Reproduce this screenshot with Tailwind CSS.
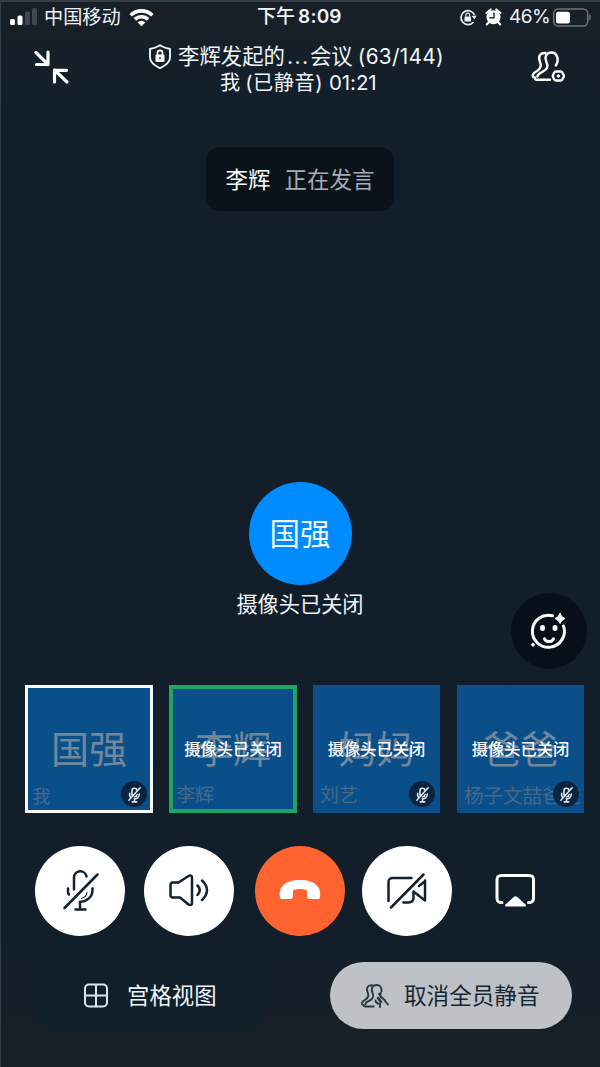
<!DOCTYPE html>
<html lang="zh-CN">
<head>
<meta charset="utf-8">
<title>视频会议</title>
<script src="https://cdn.jsdelivr.net/npm/@tailwindcss/browser@4"></script>
</head>
<body class="font-[Inter,'Noto_Sans_CJK_SC',sans-serif]">
<main class="relative flex h-[1067px] w-[600px] flex-col overflow-hidden border-t-2 border-l border-[#323d46] bg-linear-to-b from-[#191f28] via-[#121f2b] via-10% to-[#121f2b] text-[#eff5fa] whitespace-nowrap">

  <!-- Status bar -->
  <header class="flex h-[30px] shrink-0 items-center pl-[9px] text-[18px] leading-[28px]">
    <svg class="h-[18px] w-[28px]" viewBox="10 7 28 18"><rect x="10" y="18" width="5" height="6" rx="1.5" fill="#fff"/><rect x="17.500" y="14.500" width="5" height="9.500" rx="1.500" fill="#fff"/><rect x="25" y="10.500" width="5" height="13.500" rx="1.500" fill="#414750"/><rect x="32" y="7" width="5" height="17" rx="1.500" fill="#414750"/></svg>
    <span class="ml-[6px] w-[78px] text-[19.2px]">中国移动</span>
    <svg class="ml-[7px] h-[18px] w-[26px]" viewBox="129 7 26 18" fill="none" stroke="#fff" stroke-width="3.600"><path d="M130.600 14.200a15.800 15.800 0 0 1 21.800 0M134.900 18.400a9.500 9.500 0 0 1 13.200 0"/><path d="M137.500 21.300q4-3.200 8 0l-4 4z" fill="#fff" stroke="none"/></svg>
    <span class="ml-[102px] w-[88px] text-[19px] font-medium">下午<b class="ml-[3px] font-semibold tracking-[0.2px]">8:09</b></span>
    <svg class="ml-[114px] h-[18px] w-[18px]" viewBox="459 7 18 18" fill="none" stroke="#eef3f7" stroke-width="1.700"><path d="M474.500 14a7 7 0 1 0-1 7"/><path d="m471.800 15 4.700-.4-2 4z" fill="#eef3f7" stroke="none"/><rect x="464.500" y="15.500" width="6.500" height="5" rx=".6" fill="#eef3f7" stroke="none"/><path d="M465.900 15.600v-1.700a1.850 1.850 0 0 1 3.700 0v1.700" stroke-width="1.200"/></svg>
    <svg class="ml-[8px] h-[18px] w-[17px]" viewBox="485 6 17 18"><circle cx="493.500" cy="15.300" r="7" fill="#fff"/><path d="m486.500 11 4.200-3.600M500.500 11l-4.200-3.600M488.500 20.500l-1.700 2M498.500 20.500l1.700 2" stroke="#fff" stroke-width="2" stroke-linecap="round"/><path d="M494 10.500v5.300h-4.500" fill="none" stroke="#1b2631" stroke-width="1.400"/></svg>
    <span class="ml-[7px] w-[43px] text-[19px] tracking-[-0.5px]">46%</span>
    <svg class="h-[19px] w-[40px]" viewBox="552 6 40 19"><rect x="553.700" y="7" width="34" height="17" rx="4.500" fill="none" stroke="#6d747b" stroke-width="1.500"/><rect x="556" y="9.700" width="14" height="11.800" rx="2.500" fill="#fff"/><path d="M589.500 13q1.500 2.500 0 5" stroke="#6d747b" stroke-width="1.500" fill="none"/></svg>
  </header>

  <!-- Meeting title -->
  <section class="flex h-[80px] shrink-0 pl-[31px]">
    <svg class="mt-[16px] h-[40px] w-[40px]" viewBox="32 48 40 40" fill="none" stroke="#fff" stroke-width="3.200" stroke-linecap="round" stroke-linejoin="round"><path d="m36 52.500 12 12M48 52v12.500H36.500M67 82 54.500 70M54.500 82V70.300h12"/></svg>
    <div class="ml-[76px] flex w-[300px] flex-col pt-[11px]">
      <div class="flex h-[27px] w-full items-center text-[21.4px]">
        <svg class="h-[26px] w-[24px]" viewBox="148 42 24 26" fill="none" stroke="#fff" stroke-width="1.800" stroke-linejoin="round"><path d="M160 43.300c3.500 2.500 6.500 3.200 10 3.700v8.500c0 5-4.500 8-10 10.700-5.500-2.700-10-5.700-10-10.700V47c3.500-.5 6.500-1.200 10-3.700z"/><rect x="155.500" y="52.500" width="9" height="7.500" rx="1" fill="#fff" stroke="none"/><path d="M157.500 53v-2.200a2.500 2.500 0 0 1 5 0V53"/><path d="M160 55v2.500" stroke="#14202c" stroke-width="1.200"/></svg>
        <span class="ml-[6px]">李辉发起的</span><span class="w-[25px] pl-[2px] tracking-[1.300px]">...</span><span>会议</span><span class="ml-[5px] text-[20.800px] tracking-[0.300px]">(63/144)</span>
      </div>
      <div class="ml-[72px] flex h-[26px] items-center text-[20.200px]"><span>我</span><span class="ml-[5px] tracking-[0.500px]">(已静音)</span><span class="ml-[6px] text-[20.500px] tracking-[-0.100px]">01:21</span></div>
    </div>
    <svg class="ml-[82px] mt-[17px] h-[36px] w-[38px]" viewBox="530 50 38 36" fill="none" stroke="#fff" stroke-width="2.400" stroke-linecap="round" stroke-linejoin="round"><path d="M555.800 66.500c3.500-5 1.800-13-4.500-13-5.500 0-6.800 5-5.200 8.500 2.500 5.500 1.500 8-3 10.500-3 1.600-5.500 2.300-5.700 5"/><path d="M545.500 54c-5.800-.5-7.700 4-5.500 9 2 4.500.5 6.800-3 9-2.500 1.500-4.500 2.800-4.300 4.800.2 1.500 1.500 1.700 2.300 1.700-.5 1.500.5 2.300 2 2.300h13"/><path d="M555.800 72.500h5q1 0 1.500 1l1.300 2.500q.5 1 0 2l-1.300 2.500q-.5 1-1.500 1h-5q-1 0-1.500-1l-1.300-2.500q-.5-1 0-2l1.300-2.500q.5-1 1.500-1z"/><circle cx="558.300" cy="77" r="1.300" fill="#fff" stroke-width="1"/></svg>
  </section>

  <!-- Active speaker -->
  <section class="ml-[205px] mt-[35px] flex h-[64px] w-[188px] shrink-0 items-center justify-center gap-[14px] rounded-[14px] bg-[#0a121b] text-[22.5px] leading-[32px]"><span class="pt-px text-white">李辉</span><span class="pt-px text-[#a6adb3]">正在发言</span></section>

  <!-- Main participant -->
  <section class="mt-[271px] flex h-[203px] w-[598px] shrink-0 flex-col items-center">
    <div class="flex h-[103px] w-[103px] items-center justify-center rounded-full bg-[#008bfe] text-[30.500px] leading-[40px]">国强</div>
    <p class="mt-[4px] text-[21.200px] leading-[30px]">摄像头已关闭</p>
  </section>
  <button class="absolute top-[591px] left-[510px] flex h-[76px] w-[76px] items-center justify-center rounded-full bg-[#07101a]">
    <svg class="h-[38px] w-[38px]" viewBox="530 612 38 38" fill="none" stroke="#fff" stroke-width="3" stroke-linecap="round"><path d="M552.500 615.800a16 16 0 1 0 11 10.200M544.500 638.800a5 5 0 0 0 9 0"/><ellipse cx="542.500" cy="628" rx="2.500" ry="3" fill="#fff" stroke="none"/><ellipse cx="555" cy="628" rx="2.500" ry="3" fill="#fff" stroke="none"/><path d="M560 613.500q1.300 4 5 5-3.700 1.300-5 5-1.300-3.700-5-5 3.700-1 5-5z" fill="#fff" stroke="#fff" stroke-width="1"/><path d="m533 642.500 2.300 2.300-2.300 2.300-2.300-2.300z" fill="#fff" stroke="none"/></svg>
  </button>

  <!-- Participants -->
  <section class="flex h-[128px] shrink-0 gap-[16px] pl-[24px]">
    <article class="relative flex h-[128px] w-[128px] shrink-0 items-center justify-center border-[3px] border-[#f7faff] bg-[#0b4f8a]"><span class="text-[38px] text-[#71889c]">国强</span><span class="absolute bottom-0 left-[4px] text-[18.500px] leading-[28px] text-[#45698b]">我</span>
      <span class="absolute right-[3px] bottom-[3px] flex h-[26px] w-[26px] items-center justify-center rounded-full bg-[#0b2541]"><svg class="h-[17px] w-[17px]" viewBox="0 0 30 30" fill="none" stroke="#dce6ee" stroke-width="2.800" stroke-linecap="round"><path d="M10.500 16V8.500a4.500 4.500 0 0 1 9 0M6.500 13v3q0 2 1 3.500M23.500 14c0 6-4 8.500-8.500 8.500V28M11 28h8M5 25 25 3M15 19q4 0 4.500-4"/></svg></span></article>
    <article class="relative flex h-[128px] w-[128px] shrink-0 items-center justify-center border-[4px] border-[#1fa463] bg-[#0b4f8a]"><span class="text-[38px] text-[#71889c]">李辉</span><span class="absolute -bottom-px left-[3px] text-[19px] leading-[28px] text-[#45698b]">李辉</span><span class="absolute inset-x-0 top-[48px] text-center text-[16.300px] leading-[24px] font-medium text-white">摄像头已关闭</span></article>
    <article class="relative flex h-[128px] w-[127px] shrink-0 items-center justify-center bg-[#0b4f8a]"><span class="text-[38px] text-[#71889c]">妈妈</span><span class="absolute bottom-[3px] left-[7px] text-[19px] leading-[28px] text-[#45698b]">刘艺</span><span class="absolute inset-x-0 top-[52px] text-center text-[16.300px] leading-[24px] font-medium text-white">摄像头已关闭</span>
      <span class="absolute right-[5px] bottom-[6px] flex h-[26px] w-[26px] items-center justify-center rounded-full bg-[#0b2541]"><svg class="h-[17px] w-[17px]" viewBox="0 0 30 30" fill="none" stroke="#dce6ee" stroke-width="2.800" stroke-linecap="round"><path d="M10.500 16V8.500a4.500 4.500 0 0 1 9 0M6.500 13v3q0 2 1 3.500M23.500 14c0 6-4 8.500-8.500 8.500V28M11 28h8M5 25 25 3M15 19q4 0 4.500-4"/></svg></span></article>
    <article class="relative ml-[1px] flex h-[128px] w-[127px] shrink-0 items-center justify-center overflow-hidden bg-[#0b4f8a]"><span class="text-[38px] text-[#71889c]">爸爸</span><span class="absolute bottom-[3px] left-[7px] text-[19.500px] leading-[28px] text-[#45698b]">杨子文喆爸爸</span><span class="absolute inset-x-0 top-[52px] text-center text-[16.300px] leading-[24px] font-medium text-white">摄像头已关闭</span>
      <span class="absolute right-[5px] bottom-[6px] flex h-[26px] w-[26px] items-center justify-center rounded-full bg-[#0b2541]"><svg class="h-[17px] w-[17px]" viewBox="0 0 30 30" fill="none" stroke="#dce6ee" stroke-width="2.800" stroke-linecap="round"><path d="M10.500 16V8.500a4.500 4.500 0 0 1 9 0M6.500 13v3q0 2 1 3.500M23.500 14c0 6-4 8.500-8.500 8.500V28M11 28h8M5 25 25 3M15 19q4 0 4.500-4"/></svg></span></article>
  </section>

  <!-- Call controls -->
  <nav class="mt-[33px] flex h-[90px] shrink-0 pl-[34px]">
    <button class="h-[90px] w-[90px] rounded-full bg-white"><svg viewBox="35 846 90 90" fill="none" stroke="#13202d" stroke-width="2.500" stroke-linecap="round"><path d="M74 889.500v-12a6.300 6.300 0 0 1 12.500-1M68 888.500v3q0 2 1 3M92.500 888.500v1.500c0 7-5.500 11.500-12.500 12v7.500M75.500 909.500h10M64.500 908 97.500 874.500"/><path d="M81.500 898.500q5-1.500 5.500-6" stroke-width="1.200"/></svg></button>
    <button class="ml-[19px] h-[90px] w-[90px] rounded-full bg-white"><svg viewBox="144 846 90 90" fill="none" stroke="#13202d" stroke-width="2.500" stroke-linecap="round" stroke-linejoin="round"><path d="M173 882.500h5.500l10-6.500c2-1.200 3.500-.5 3.500 1.500v25.500c0 2-1.500 2.700-3.500 1.500l-8.500-7h-7q-2.500 0-2.500-2.500v-10q0-2.500 2.500-2.500z"/><path d="M197.500 885.500q4.500 4.500 0 9.500M202 880.500q10 9.500 0 19.500"/></svg></button>
    <button class="ml-[21px] h-[90px] w-[90px] rounded-full bg-[#ff632f]"><svg viewBox="255 846 90 90" fill="#fff"><path d="M280 897.500c-2-12 7-17.500 20-17.500s22 5.500 20 17.500c-.3 1-1 1.500-2 1.500h-8c-2 0-3-1-3-3v-5c0-1.500-5-2-7-2s-7 .5-7 2v5c0 2-1 3-3 3h-8c-1 0-1.700-.5-2-1.500z"/></svg></button>
    <button class="ml-[17px] h-[90px] w-[90px] rounded-full bg-white"><svg viewBox="362 846 90 90" fill="none" stroke="#13202d" stroke-width="2.500" stroke-linecap="round" stroke-linejoin="round"><path d="M388.500 901v-18.500c0-3.500 1-4.500 4.500-4.500h18.500M403.500 902.500h5c3 0 5-1.500 5-5v-6l11.500 9v-20M391 907.500l32.500-33M419 886l5-4"/></svg></button>
    <button class="ml-[18px] h-[90px] w-[90px]"><svg viewBox="470 846 90 90" fill="none" stroke="#fff" stroke-width="3" stroke-linecap="round"><path d="M502 902.500c-3.500 0-5-1-5-4.500v-18c0-3.500 1-4.500 4.500-4.500h27.500c3.500 0 4.500 1 4.500 4.500v18c0 3.500-1.500 4.500-5 4.500"/><path d="M505.500 906.500q-1-1 0-2l8-7.300q2-1.700 4 0l8 7.300q.8 1 0 2z" fill="#fff" stroke="none"/></svg></button>
  </nav>

  <!-- Bottom actions -->
  <footer class="flex grow bg-linear-to-b from-[#121f2b] to-[#191f27] pt-[26px] pl-[29px]">
    <button class="flex h-[67px] w-[241px] items-center rounded-full bg-[#111f2b] pl-[53px] text-[22.400px]"><svg class="h-[26px] w-[26px]" viewBox="83 982 26 26" fill="none" stroke="#dce5ef" stroke-width="2"><rect x="85" y="983.500" width="22" height="22" rx="4"/><path d="M96 983.500v22M85 994.500h22"/></svg><span class="ml-[18px]">宫格视图</span></button>
    <button class="ml-[59px] flex h-[67px] w-[242px] items-center rounded-full bg-[#bec1c6] pl-[29px] text-[22.600px] text-[#172634]"><svg class="h-[28px] w-[30px]" viewBox="358 981 30 28" fill="none" stroke="#293743" stroke-width="1.900" stroke-linecap="round" stroke-linejoin="round"><path d="M380.500 990.500c.5-4-1.500-6.500-5-6.500-4.500 0-5.500 4-4.200 7 1.800 4.500 1 6.500-2.300 8.300-2.500 1.300-4.500 1.900-4.600 4"/><path d="M371 984.300c-4.700-.4-6 3.200-4.300 7.200 1.600 3.600.4 5.500-2.500 7.200-2 1.200-3.600 2.300-3.400 3.800.1 1.200 1 1.500 1.800 1.500 0 1 .5 1.500 1.700 1.500h8.500"/><path d="M374.500 999.500q.5 3 4.500 3.500v3M378 993l9 10.500M379.500 992v4l4.500 3"/><path d="m377 997 3 4" stroke-width="2.600"/></svg><span class="ml-[15px]">取消全员静音</span></button>
  </footer>
</main>
</body>
</html>
